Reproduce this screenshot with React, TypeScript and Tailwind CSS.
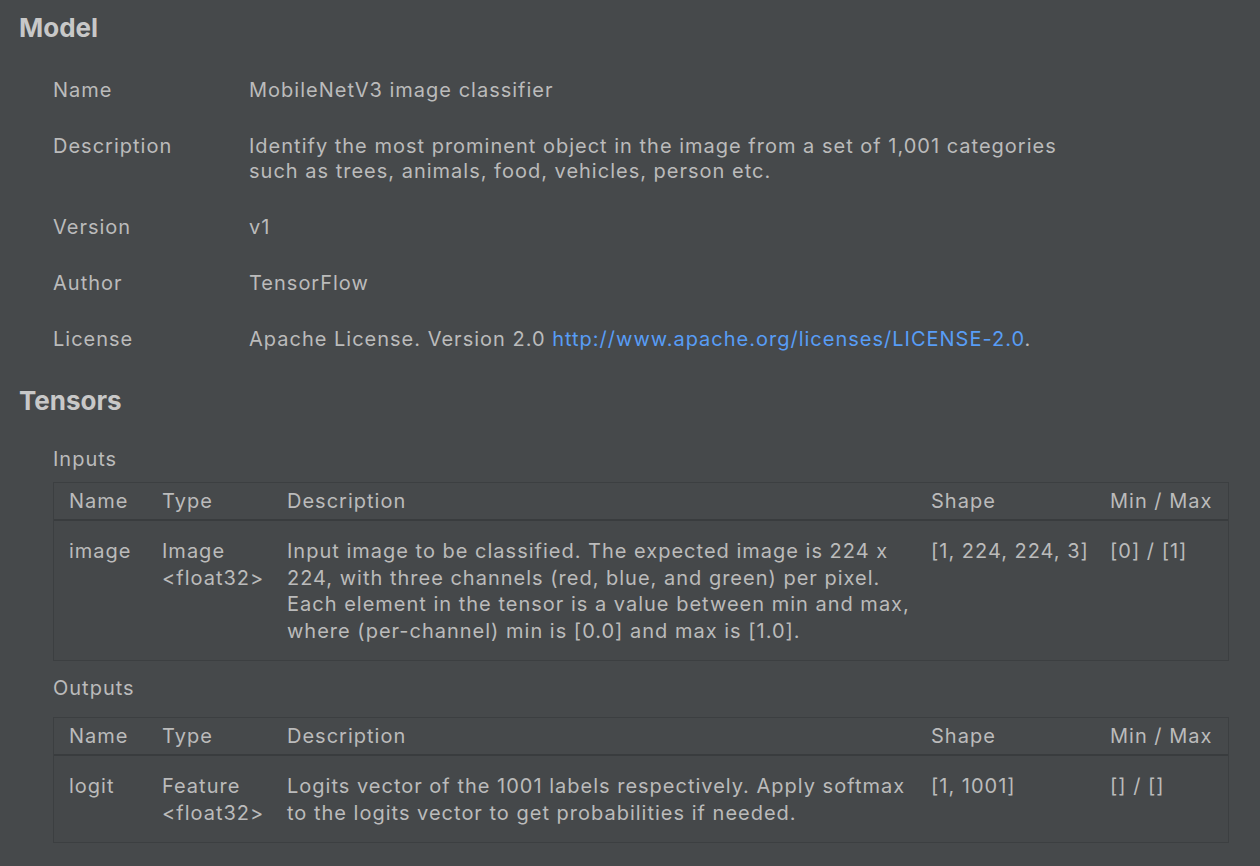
import React from 'react';

const font = { fontFamily: 'Inter, "Liberation Sans", sans-serif' };

function Field({ label, children }: { label: string; children: React.ReactNode }) {
  return (
    <div className="flex py-[15.5px] leading-[25px]">
      <div className="w-[196px] shrink-0">{label}</div>
      <div>{children}</div>
    </div>
  );
}

type Row = { name: string; type: string[]; desc: string[]; shape: string; minmax: string };

function TensorTable({ row }: { row: Row }) {
  const cols = 'grid grid-cols-[93px_125px_644px_179px_1fr] px-[15px]';
  return (
    <div className="ml-[53px] mr-[31px] border border-[#3c3f41] bg-[#45484a]">
      <div className={`${cols} h-[38px] items-center border-b-2 border-[#393c3e] bg-[#46494b]`}>
        <div>Name</div>
        <div>Type</div>
        <div>Description</div>
        <div>Shape</div>
        <div>Min / Max</div>
      </div>
      <div className={`${cols} pt-[17px] pb-[16px] leading-[26.5px]`}>
        <div>{row.name}</div>
        <div>
          {row.type.map((t) => (
            <div key={t} className="whitespace-nowrap">{t}</div>
          ))}
        </div>
        <div>
          {row.desc.map((d) => (
            <div key={d} className="whitespace-nowrap">{d}</div>
          ))}
        </div>
        <div className="whitespace-nowrap">{row.shape}</div>
        <div className="whitespace-nowrap">{row.minmax}</div>
      </div>
    </div>
  );
}

export default function App() {
  return (
    <div
      className="min-h-[866px] bg-[#46494b] text-[#bbbbbb] text-[20px] tracking-[1px] pt-[13px]"
      style={font}
    >
      <h2 className="pl-[19px] text-[26px] font-bold leading-[30px] tracking-normal text-[#c8c8c8]">Model</h2>

      <div className="pl-[53px] pt-[19px]">
        <Field label="Name">MobileNetV3 image classifier</Field>
        <Field label="Description">
          <div>Identify the most prominent object in the image from a set of 1,001 categories</div>
          <div>such as trees, animals, food, vehicles, person etc.</div>
        </Field>
        <Field label="Version">v1</Field>
        <Field label="Author">TensorFlow</Field>
        <Field label="License">
          Apache License. Version 2.0{' '}
          <span className="text-[#589df6]">http://www.apache.org/licenses/LICENSE-2.0</span>.
        </Field>
      </div>

      <h2 className="pl-[19px] pt-[19px] text-[26px] font-bold leading-[30px] tracking-normal text-[#c8c8c8]">
        Tensors
      </h2>

      <div className="pl-[53px] pt-[32px] pb-[12px] leading-[22px]">Inputs</div>
      <TensorTable
        row={{
          name: 'image',
          type: ['Image', '<float32>'],
          desc: [
            'Input image to be classified. The expected image is 224 x',
            '224, with three channels (red, blue, and green) per pixel.',
            'Each element in the tensor is a value between min and max,',
            'where (per-channel) min is [0.0] and max is [1.0].',
          ],
          shape: '[1, 224, 224, 3]',
          minmax: '[0] / [1]',
        }}
      />

      <div className="pl-[53px] pt-[16px] pb-[18px] leading-[22px]">Outputs</div>
      <TensorTable
        row={{
          name: 'logit',
          type: ['Feature', '<float32>'],
          desc: [
            'Logits vector of the 1001 labels respectively. Apply softmax',
            'to the logits vector to get probabilities if needed.',
          ],
          shape: '[1, 1001]',
          minmax: '[] / []',
        }}
      />
    </div>
  );
}
